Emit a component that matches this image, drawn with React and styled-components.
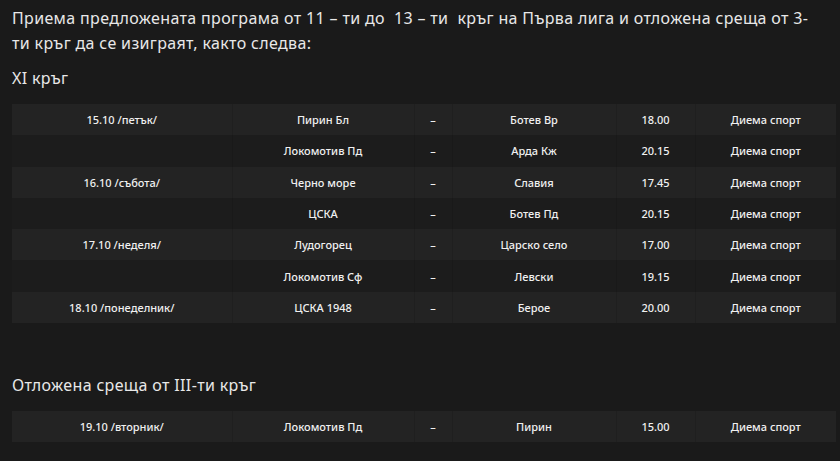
import React from 'react';
import styled, { createGlobalStyle } from 'styled-components';

const GlobalStyle = createGlobalStyle`
  html, body {
    margin: 0;
    background: #1a1a1a;
  }
  body {
    font-family: 'Noto Sans', 'Open Sans', sans-serif;
    color: #e8e8e8;
  }
`;

const Page = styled.div`
  padding: 6px 4px 20px 12px;
  width: 840px;
  box-sizing: border-box;
`;

const Intro = styled.p`
  margin: 0;
  font-size: 16px;
  line-height: 25px;
  letter-spacing: 0.35px;
`;

const RoundTitle = styled.h3`
  margin: ${p => p.$top || '11px'} 0 15px;
  font-size: 16px;
  line-height: 22px;
  font-weight: 400;
  letter-spacing: 0.35px;
`;

const Table = styled.table`
  width: 824px;
  border-collapse: collapse;
  table-layout: fixed;
  font-size: 11px;
  font-weight: 500;
  color: #f0f0f0;
`;

const Row = styled.tr`
  height: 31.3px;
  background: ${p => (p.$odd ? '#232323' : '#1c1c1c')};
`;

const Cell = styled.td`
  padding: 0 6px;
  text-align: center;
  white-space: nowrap;
  border-left: 1px solid rgba(0, 0, 0, 0.1);
  &:first-child {
    border-left: none;
  }
`;

const widths = [220, 182, 38, 164, 79, 141];

const round11 = [
  ['15.10 /петък/', 'Пирин Бл', 'Ботев Вр', '18.00'],
  ['', 'Локомотив Пд', 'Арда Кж', '20.15'],
  ['16.10 /събота/', 'Черно море', 'Славия', '17.45'],
  ['', 'ЦСКА', 'Ботев Пд', '20.15'],
  ['17.10 /неделя/', 'Лудогорец', 'Царско село', '17.00'],
  ['', 'Локомотив Сф', 'Левски', '19.15'],
  ['18.10 /понеделник/', 'ЦСКА 1948', 'Берое', '20.00'],
];

const postponed = [['19.10 /вторник/', 'Локомотив Пд', 'Пирин', '15.00']];

const Schedule = ({ rows }) => (
  <Table>
    <colgroup>
      {widths.map((w, i) => (
        <col key={i} style={{ width: w }} />
      ))}
    </colgroup>
    <tbody>
      {rows.map(([date, home, away, time], i) => (
        <Row key={i} $odd={i % 2 === 0}>
          <Cell>{date}</Cell>
          <Cell>{home}</Cell>
          <Cell>–</Cell>
          <Cell>{away}</Cell>
          <Cell>{time}</Cell>
          <Cell>Диема спорт</Cell>
        </Row>
      ))}
    </tbody>
  </Table>
);

export default function App() {
  return (
    <Page lang="bg">
      <GlobalStyle />
      <Intro>
        Приема предложената програма от 11 – ти до&nbsp; 13 – ти&nbsp; кръг на Първа лига и отложена среща от 3-
        <br />
        ти кръг да се изиграят, както следва:
      </Intro>
      <RoundTitle>XI кръг</RoundTitle>
      <Schedule rows={round11} />
      <RoundTitle $top="51px">Отложена среща от III-ти кръг</RoundTitle>
      <Schedule rows={postponed} />
    </Page>
  );
}
